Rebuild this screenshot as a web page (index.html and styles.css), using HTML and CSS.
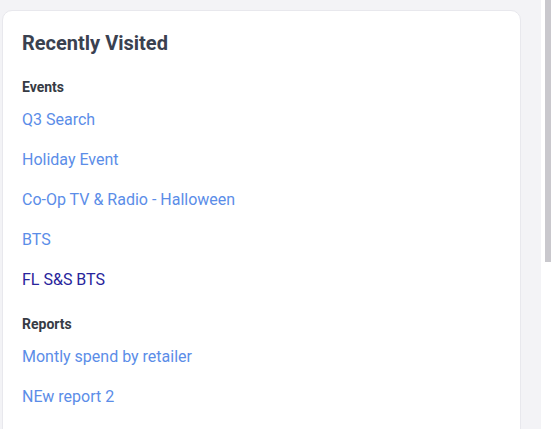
FILE: index.html
```html
<!DOCTYPE html>
<html>
<head>
<meta charset="utf-8">
<link rel="stylesheet" href="styles.css">
</head>
<body>
<div class="page">
  <section class="card">
    <h2 class="title">Recently Visited</h2>
    <div class="group">
      <h3 class="label">Events</h3>
      <a class="link" href="#">Q3 Search</a>
      <a class="link" href="#">Holiday Event</a>
      <a class="link" href="#">Co-Op TV &amp; Radio - Halloween</a>
      <a class="link" href="#">BTS</a>
      <a class="link visited" href="#">FL S&amp;S BTS</a>
    </div>
    <div class="group">
      <h3 class="label">Reports</h3>
      <a class="link" href="#">Montly spend by retailer</a>
      <a class="link" href="#">NEw report 2</a>
    </div>
  </section>
</div>
<div class="scrollbar"><div class="thumb"></div></div>
</body>
</html>
```
FILE: styles.css
```css
html, body {
  margin: 0;
  padding: 0;
  height: 100%;
  overflow: hidden;
}
body {
  background: #f3f3f6;
  font-family: Roboto, "Liberation Sans", sans-serif;
}
.page {
  padding: 10px 30px 0 2px;
}
.card {
  background: #ffffff;
  border: 1px solid #e8e8ed;
  border-radius: 10px;
  padding: 20px 19px 40px;
  min-height: 500px;
}
.title {
  margin: 0 0 23px;
  font-size: 20px;
  font-weight: 700;
  color: #3a4150;
  line-height: 24px;
}
.group {
  display: flex;
  flex-direction: column;
  align-items: flex-start;
  margin-bottom: 15px;
}
.label {
  margin: 0 0 4px;
  font-size: 14px;
  font-weight: 700;
  color: #363b44;
  line-height: 18px;
}
.link {
  font-size: 16px;
  line-height: 20px;
  padding: 10px 0;
  color: #5b8de8;
  text-decoration: none;
}
.link.visited {
  color: #28249c;
}
.scrollbar {
  position: absolute;
  top: 0;
  right: 0;
  width: 10px;
  height: 100%;
  background: #ffffff;
}
.thumb {
  margin-left: 4px;
  width: 6px;
  height: 262px;
  background: #c9c8cd;
}
```
